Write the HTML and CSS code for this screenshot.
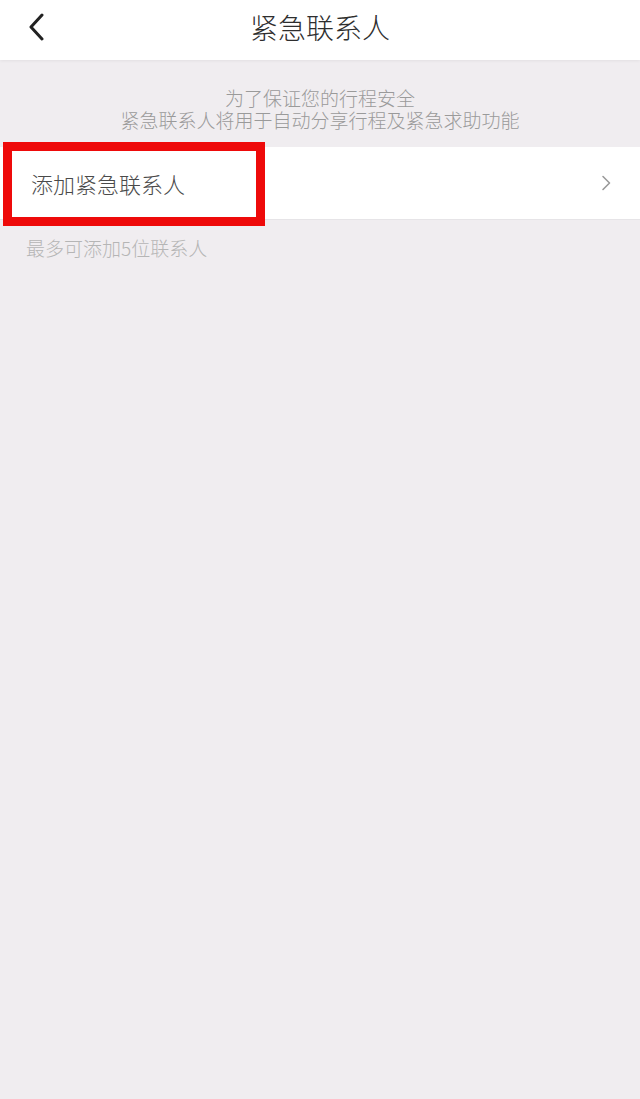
FILE: index.html
```html
<!DOCTYPE html>
<html lang="zh-CN">
<head>
<meta charset="utf-8">
<title>紧急联系人</title>
<link rel="stylesheet" href="styles.css">
</head>
<body>
<header class="topbar">
  <div class="back">
    <svg width="18" height="28" viewBox="0 0 18 28"><path d="M15 2 L4 14 L15 26" fill="none" stroke="#222" stroke-width="3" stroke-linecap="round" stroke-linejoin="round"/></svg>
  </div>
  <h1 class="title">紧急联系人</h1>
  <div class="spacer"></div>
</header>
<section class="intro">
  <p>为了保证您的行程安全</p>
  <p>紧急联系人将用于自动分享行程及紧急求助功能</p>
</section>
<div class="row">
  <span class="row-label">添加紧急联系人</span>
  <svg class="row-arrow" width="10" height="16" viewBox="0 0 10 16"><path d="M2 1.5 L8.5 8 L2 14.5" fill="none" stroke="#9a9a9a" stroke-width="1.6" stroke-linecap="round" stroke-linejoin="round"/></svg>
  <div class="highlight"></div>
</div>
<p class="note">最多可添加5位联系人</p>
</body>
</html>
```

FILE: styles.css
```css
html, body {
  margin: 0;
  padding: 0;
}
body {
  background: #f0edf0;
  font-family: "Noto Sans CJK SC", "Noto Sans", sans-serif;
  font-weight: 300;
  min-height: 1099px;
}
.topbar {
  height: 60px;
  background: #fff;
  display: grid;
  grid-template-columns: 1fr auto 1fr;
  align-items: center;
  box-shadow: 0 1px 3px rgba(0,0,0,0.06);
}
.back {
  padding-left: 27px;
  display: flex;
  align-items: center;
  height: 60px;
  margin-top: -6px;
}
.title {
  margin: 0;
  font-size: 28px;
  font-weight: 300;
  color: #2e2e2e;
  line-height: 60px;
  margin-top: -6px;
}
.intro {
  padding-top: 27px;
  text-align: center;
  color: #9a9a9a;
  font-size: 19px;
  line-height: 22px;
}
.intro p {
  margin: 0;
}
.row {
  position: relative;
  margin-top: 16px;
  height: 73px;
  background: #fff;
  border-bottom: 1px solid #e6e4e7;
  display: flex;
  align-items: center;
  justify-content: space-between;
  padding: 0 29px 0 31px;
  box-sizing: border-box;
}
.row-label {
  font-size: 22px;
  color: #4a4a4a;
}
.highlight {
  position: absolute;
  left: 3px;
  top: -5px;
  width: 262px;
  height: 84px;
  border: 9px solid #ee0a0a;
  box-sizing: border-box;
}
.note {
  margin: 17px 0 0;
  padding-left: 26px;
  font-size: 19px;
  line-height: 22px;
  color: #b5b5b5;
}
```
